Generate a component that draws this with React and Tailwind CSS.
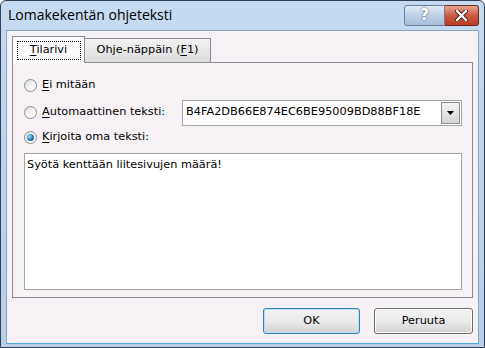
import React from "react";

const font = { fontFamily: '"DejaVu Sans", "Liberation Sans", sans-serif' };

function Radio({ checked }) {
  return (
    <span className="relative flex h-[13px] w-[13px] shrink-0 items-center justify-center rounded-full border border-[#8e8f8f] bg-gradient-to-br from-[#d9d9d9] via-[#f4f4f4] to-white">
      {checked && (
        <span className="h-[7px] w-[7px] rounded-full bg-[radial-gradient(circle_at_35%_35%,#9ee0fb,#1f6fb1_60%,#0d3f7a)]" />
      )}
    </span>
  );
}

function Label({ u, rest }) {
  return (
    <span className="text-[11.3px] text-black">
      <span className="underline underline-offset-2">{u}</span>
      {rest}
    </span>
  );
}

export default function App() {
  return (
    <div className="h-[348px] w-[485px] bg-white" style={font}>
      <div className="flex h-[348px] w-[485px] flex-col rounded-t-[6px] border border-[#2f3f54] bg-gradient-to-b from-[#c6daf0] to-[#b7cfe9]">
        {/* title bar */}
        <div className="flex h-[29px] shrink-0 items-start justify-between pl-[7px] pr-[5px]">
          <span
            className="mt-[5px] text-[14px] leading-[18px] text-black"
            style={{ fontFamily: '"Open Sans", "Noto Sans", sans-serif' }}
          >
            Lomakekentän ohjeteksti
          </span>
          <div className="mt-[4px] flex">
            <div className="flex h-[21px] w-[41px] items-center justify-center rounded-l-[3px] border border-[#6b7f9a] bg-gradient-to-b from-[#e1eaf5] via-[#bfd0e6] to-[#a9bfda]">
              <span className="text-[15px] font-bold leading-none text-white [text-shadow:0_0_2px_#3a4f6b]">?</span>
            </div>
            <div className="flex h-[21px] w-[34px] items-center justify-center rounded-r-[3px] border border-l-0 border-[#6e2a1e] bg-gradient-to-b from-[#e8a493] via-[#cb5a40] to-[#b73d22]">
              <svg width="13" height="11" viewBox="0 0 13 11">
                <path d="M2 1 L11 10 M11 1 L2 10" stroke="#3b1a12" strokeWidth="4" strokeLinecap="round" />
                <path d="M2 1 L11 10 M11 1 L2 10" stroke="white" strokeWidth="2.4" strokeLinecap="round" />
              </svg>
            </div>
          </div>
        </div>

        {/* client area */}
        <div className="mx-[5px] mb-[3px] flex flex-1 flex-col border border-[#8aa3c2] border-b-[#49a8d8] bg-[#f5f1f5]">
          {/* tabs */}
          <div className="mt-[5px] flex items-end pl-[5px]">
            <div className="z-10 -mb-px flex h-[27px] w-[73px] items-center justify-center border border-b-0 border-[#898c95] bg-[#fcfcfe]">
              <span className="flex h-[19px] w-[64px] items-center justify-center border border-dotted border-black">
                <Label u="T" rest="ilarivi" />
              </span>
            </div>
            <div className="flex h-[24px] w-[126px] items-center justify-center border border-l-0 border-b-0 border-[#898c95] bg-gradient-to-b from-[#f2f2f2] to-[#dcdcdc]">
              <span className="text-[11.3px] text-black">
                Ohje-näppäin (<span className="underline underline-offset-2">F</span>1)
              </span>
            </div>
          </div>

          {/* tab panel */}
          <div className="ml-[5px] mr-[5px] flex h-[236px] flex-col border border-[#898c95] bg-[#f5f1f5] pl-[11px] pr-[10px]">
            <div className="mt-[14px] flex items-center gap-[5px]">
              <Radio />
              <Label u="E" rest="i mitään" />
            </div>
            <div className="mt-[6px] flex items-center">
              <div className="flex w-[158px] items-center gap-[5px]">
                <Radio />
                <Label u="A" rest="utomaattinen teksti:" />
              </div>
              <div className="flex h-[26px] flex-1 items-center border border-[#a5a5a5] bg-white pl-[3px]">
                <span className="flex-1 text-[11.3px] text-black">B4FA2DB66E874EC6BE95009BD88BF18E</span>
                <div className="mr-[1px] flex h-[22px] w-[19px] items-center justify-center border border-[#8e8f8f] bg-gradient-to-b from-[#f3f3f3] to-[#d5d5d5]">
                  <svg width="7" height="4" viewBox="0 0 7 4">
                    <path d="M0 0 H7 L3.5 4 Z" fill="black" />
                  </svg>
                </div>
              </div>
            </div>
            <div className="mt-[3px] flex items-center gap-[5px]">
              <Radio checked />
              <Label u="K" rest="irjoita oma teksti:" />
            </div>
            <div className="mt-[7px] h-[137px] border border-[#a5a5a5] bg-white px-[2px] pt-[3px] text-[11.3px] leading-[16px] text-black">
              Syötä kenttään liitesivujen määrä!
            </div>
          </div>

          {/* buttons */}
          <div className="mt-[10px] flex justify-end gap-[14px] pr-[5px]">
            <div className="flex h-[26px] w-[97px] items-center justify-center rounded-[3px] border border-[#3c7fb1] bg-gradient-to-b from-[#f2f2f2] via-[#ebebeb] to-[#d2d2d2] shadow-[inset_0_0_0_1px_#b3e0f8]">
              <span className="text-[11.3px] text-black">OK</span>
            </div>
            <div className="flex h-[26px] w-[99px] items-center justify-center rounded-[3px] border border-[#707070] bg-gradient-to-b from-[#f2f2f2] via-[#ebebeb] to-[#d2d2d2] shadow-[inset_0_0_0_1px_#fcfcfc]">
              <span className="text-[11.3px] text-black">Peruuta</span>
            </div>
          </div>
        </div>
      </div>
    </div>
  );
}
